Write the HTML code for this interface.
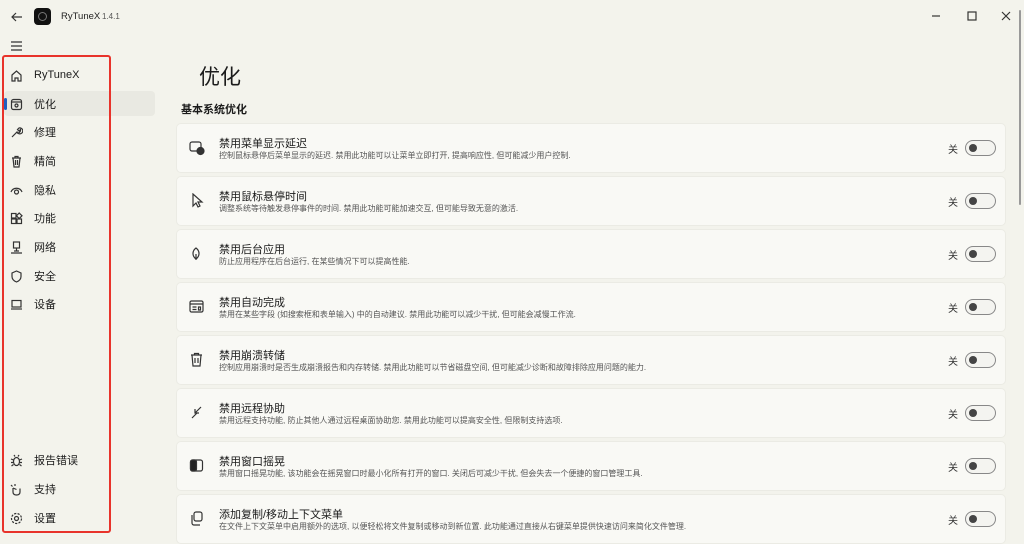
<!DOCTYPE html>
<html><head><meta charset="utf-8"><style>
*{margin:0;padding:0;box-sizing:border-box}
body{width:1024px;height:535px;overflow:hidden;background:#f3f3ec;font-family:"Liberation Sans","Noto Sans CJK SC",sans-serif;color:#1b1b1b;position:relative}
.a{position:absolute}
svg{position:absolute;fill:none;stroke:#333;stroke-width:1.2}
.nav{position:absolute;left:34px;font-size:11px;transform:translateY(-50%)}
.card{position:absolute;left:176px;width:830px;height:50px;background:#f9f9f5;border:1px solid #ebebe4;border-radius:5px}
.card .t{position:absolute;left:42px;top:11px;font-size:11px;color:#1b1b1b}
.card .d{position:absolute;left:42px;top:26px;font-size:8px;color:#555}
.card .k{position:absolute;left:771px;top:17px;font-size:10px;color:#333}
.card .tg{position:absolute;left:788px;top:16px;width:31px;height:16px;border:1px solid #888;border-radius:8px;background:#f4f4f0}
.card .tg:after{content:"";position:absolute;left:3px;top:3px;width:8px;height:8px;border-radius:50%;background:#444}
.card svg{left:12px;top:16px}
</style></head><body>
<svg style="left:10px;top:10px" width="14" height="14" viewBox="0 0 14 14"><path d="M12 7H2M6 3L2 7l4 4"/></svg>
<div class="a" style="left:34px;top:8px;width:17px;height:17px;background:#111;border-radius:4px"></div>
<div class="a" style="left:38px;top:12px;width:9px;height:9px;border:1px solid #777;border-radius:50%"></div>
<div class="a" style="left:61px;top:11px;font-size:9.5px;color:#222">RyTuneX</div>
<div class="a" style="left:102px;top:12px;font-size:8px;color:#555">1.4.1</div>
<svg style="left:930px;top:10px" width="12" height="12"><path d="M2 6h8"/></svg>
<svg style="left:966px;top:11px" width="12" height="12"><rect x="2" y="1" width="8" height="8"/></svg>
<svg style="left:1000px;top:10px" width="12" height="12"><path d="M2 2l8 8M10 2l-8 8"/></svg>
<svg style="left:10px;top:40px" width="14" height="12"><path d="M1 2h11M1 6h11M1 10h11"/></svg>
<div class="a" style="left:1019px;top:10px;width:2px;height:195px;background:#999;border-radius:1px"></div>

<div class="a" style="left:4px;top:91px;width:151px;height:25px;background:#e9e9e2;border-radius:4px"></div>
<div class="a" style="left:4px;top:98px;width:3px;height:12px;background:#1f5fbf;border-radius:2px"></div>
<div class="a" style="left:2px;top:55px;width:109px;height:478px;border:2px solid #e8332b;border-radius:3px"></div>

<svg style="left:10px;top:69px" width="13" height="13"><path d="M2 6l4.5-4 4.5 4v6H8V9H5v3H2z"/></svg>
<div class="nav" style="top:75px">RyTuneX</div>
<svg style="left:10px;top:98px" width="13" height="13"><rect x="1.5" y="1.5" width="10" height="10" rx="2"/><circle cx="6.5" cy="7.5" r="1.5"/><path d="M2 4h9"/></svg>
<div class="nav" style="top:104px">优化</div>
<svg style="left:10px;top:126px" width="13" height="13"><path d="M2 11l5-5a3 3 0 1 0 2-4L7.5 3.5 9 5l1.5-1.5A3 3 0 0 1 7 7"/></svg>
<div class="nav" style="top:132px">修理</div>
<svg style="left:10px;top:155px" width="13" height="13"><path d="M2 3h9M5 3V1.5h3V3M3 3l1 9h5l1-9M5.5 5v5M7.5 5v5"/></svg>
<div class="nav" style="top:161px">精简</div>
<svg style="left:10px;top:184px" width="13" height="13"><path d="M1 8c2-5 9-5 11 0"/><circle cx="6.5" cy="8" r="2"/></svg>
<div class="nav" style="top:190px">隐私</div>
<svg style="left:10px;top:212px" width="13" height="13"><rect x="1.5" y="1.5" width="4.5" height="4.5"/><rect x="1.5" y="7" width="4.5" height="4.5"/><rect x="7" y="7" width="4.5" height="4.5"/><path d="M9.2 1l2.8 2.8-2.8 2.8-2.8-2.8z"/></svg>
<div class="nav" style="top:218px">功能</div>
<svg style="left:10px;top:241px" width="13" height="13"><rect x="3.5" y="1" width="6" height="6"/><path d="M6.5 7v3M1 12h11M4 10h5"/></svg>
<div class="nav" style="top:247px">网络</div>
<svg style="left:10px;top:270px" width="13" height="13"><path d="M6.5 1L2 3v3.5c0 3 2 4.5 4.5 5.5 2.5-1 4.5-2.5 4.5-5.5V3z"/></svg>
<div class="nav" style="top:276px">安全</div>
<svg style="left:10px;top:298px" width="13" height="13"><rect x="2" y="2.5" width="9" height="6.5"/><path d="M1 11h11"/></svg>
<div class="nav" style="top:304px">设备</div>
<svg style="left:10px;top:454px" width="13" height="13"><ellipse cx="6.5" cy="7.5" rx="3" ry="4"/><path d="M1 5l2.5 1M12 5L9.5 6M1 8.5h2.5M12 8.5H9.5M1.5 12l2-1.5M11.5 12l-2-1.5M5 2.5l-1-1.5M8 2.5l1-1.5"/></svg>
<div class="nav" style="top:460px">报告错误</div>
<svg style="left:10px;top:483px" width="13" height="13"><path d="M3 5v4c0 2 1.5 3 3.5 3S10 11 10 9V5.5M3 5l3.5 1.5M1 2l1.5 1.5M5 1v2"/></svg>
<div class="nav" style="top:489px">支持</div>
<svg style="left:10px;top:512px" width="13" height="13"><circle cx="6.5" cy="6.5" r="2"/><circle cx="6.5" cy="6.5" r="5" stroke-dasharray="2.2 1.3"/></svg>
<div class="nav" style="top:518px">设置</div>

<div class="a" style="left:199px;top:61px;font-size:21px;color:#1b1b1b">优化</div>
<div class="a" style="left:181px;top:101px;font-size:11px;font-weight:bold">基本系统优化</div>

<div class="card" style="top:123px"><svg width="16" height="16"><rect x="1" y="2" width="11" height="9" rx="2"/><circle cx="11.5" cy="11" r="3.5" fill="#333"/></svg><div class="t">禁用菜单显示延迟</div><div class="d">控制鼠标悬停后菜单显示的延迟. 禁用此功能可以让菜单立即打开, 提高响应性, 但可能减少用户控制.</div><div class="k">关</div><div class="tg"></div></div>
<div class="card" style="top:176px"><svg width="16" height="16"><path d="M4 1v12l3-3 2 4 2-1-2-4h4z"/></svg><div class="t">禁用鼠标悬停时间</div><div class="d">调整系统等待触发悬停事件的时间. 禁用此功能可能加速交互, 但可能导致无意的激活.</div><div class="k">关</div><div class="tg"></div></div>
<div class="card" style="top:229px"><svg width="16" height="16"><path d="M7 2C3 5 3 10 7 13c4-3 4-8 0-11zM7 8v6"/></svg><div class="t">禁用后台应用</div><div class="d">防止应用程序在后台运行, 在某些情况下可以提高性能.</div><div class="k">关</div><div class="tg"></div></div>
<div class="card" style="top:282px"><svg width="16" height="16"><rect x="1" y="2" width="13" height="11" rx="1.5"/><path d="M1 5h13M3.5 8h4M3.5 10.5h4M9.5 8h2v3h-2z"/></svg><div class="t">禁用自动完成</div><div class="d">禁用在某些字段 (如搜索框和表单输入) 中的自动建议. 禁用此功能可以减少干扰, 但可能会减慢工作流.</div><div class="k">关</div><div class="tg"></div></div>
<div class="card" style="top:335px"><svg width="16" height="16"><path d="M2 3h11M5.5 3V1.5h4V3M3 3l1 11h7l1-11M6 6v5M9 6v5"/></svg><div class="t">禁用崩溃转储</div><div class="d">控制应用崩溃时是否生成崩溃报告和内存转储. 禁用此功能可以节省磁盘空间, 但可能减少诊断和故障排除应用问题的能力.</div><div class="k">关</div><div class="tg"></div></div>
<div class="card" style="top:388px"><svg width="16" height="16"><path d="M12 2L6 8M6 4v4h4M3 13l5-5"/></svg><div class="t">禁用远程协助</div><div class="d">禁用远程支持功能, 防止其他人通过远程桌面协助您. 禁用此功能可以提高安全性, 但限制支持选项.</div><div class="k">关</div><div class="tg"></div></div>
<div class="card" style="top:441px"><svg width="16" height="16"><rect x="1.5" y="2" width="12" height="11" rx="2"/><rect x="1.5" y="2" width="6" height="11" rx="2" fill="#222"/></svg><div class="t">禁用窗口摇晃</div><div class="d">禁用窗口摇晃功能, 该功能会在摇晃窗口时最小化所有打开的窗口. 关闭后可减少干扰, 但会失去一个便捷的窗口管理工具.</div><div class="k">关</div><div class="tg"></div></div>
<div class="card" style="top:494px"><svg width="16" height="16"><rect x="5" y="1" width="8" height="9" rx="2"/><path d="M3 4v8a2 2 0 0 0 2 2h6"/></svg><div class="t">添加复制/移动上下文菜单</div><div class="d">在文件上下文菜单中启用额外的选项, 以便轻松将文件复制或移动到新位置. 此功能通过直接从右键菜单提供快速访问来简化文件管理.</div><div class="k">关</div><div class="tg"></div></div>
</body></html>
